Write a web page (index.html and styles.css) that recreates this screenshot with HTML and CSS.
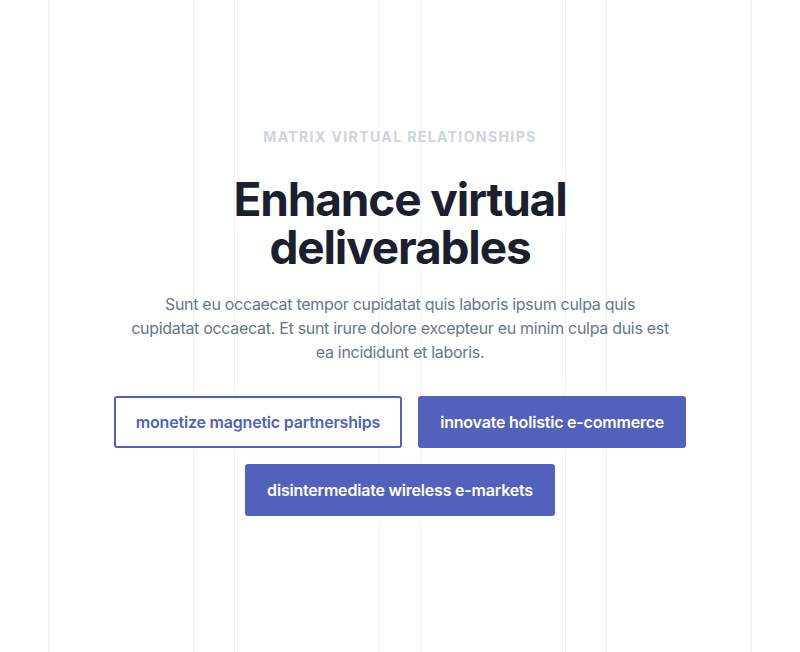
FILE: index.html
```html
<!DOCTYPE html>
<html lang="en">
<head>
<meta charset="utf-8">
<title>Enhance virtual deliverables</title>
<link rel="stylesheet" href="styles.css">
</head>
<body>
<div class="grid-bg" aria-hidden="true">
  <div class="col"></div>
  <div class="col"></div>
  <div class="col"></div>
  <div class="col"></div>
</div>
<main class="hero">
  <p class="eyebrow">Matrix virtual relationships</p>
  <h1 class="title">Enhance virtual<br>deliverables</h1>
  <p class="lead">Sunt eu occaecat tempor cupidatat quis laboris ipsum culpa quis cupidatat occaecat. Et sunt irure dolore excepteur eu minim culpa duis est ea incididunt et laboris.</p>
  <div class="actions">
    <a class="btn btn-outline" href="#">monetize magnetic partnerships</a>
    <a class="btn btn-solid" href="#">innovate holistic e-commerce</a>
    <a class="btn btn-solid" href="#">disintermediate wireless e-markets</a>
  </div>
</main>
</body>
</html>
```
FILE: styles.css
```css
* { box-sizing: border-box; }
html, body { margin: 0; padding: 0; }
body {
  background: #ffffff;
  font-family: Inter, "Noto Sans", sans-serif;
  min-height: 652px;
  position: relative;
  overflow: hidden;
}
.grid-bg {
  position: absolute;
  top: 0; bottom: 0; left: 48px; right: 48px;
  display: grid;
  grid-template-columns: repeat(4, 1fr);
  column-gap: 40px;
  z-index: 0;
}
.col {
  border-left: 1px solid #f0f1f6;
  border-right: 1px solid #f0f1f6;
}
.hero {
  position: relative;
  z-index: 1;
  display: flex;
  flex-direction: column;
  align-items: center;
  text-align: center;
  padding-top: 127px;
}
.eyebrow {
  margin: 0;
  font-size: 14px;
  line-height: 20px;
  font-weight: 700;
  letter-spacing: 0.1em;
  text-transform: uppercase;
  color: #cbd4e0;
}
.title {
  margin: 28px 0 0;
  font-size: 46px;
  line-height: 48px;
  font-weight: 700;
  letter-spacing: -0.025em;
  color: #1b1f2e;
}
.lead {
  margin: 21px 0 0;
  max-width: 539px;
  font-size: 16px;
  line-height: 24px;
  letter-spacing: -0.3px;
  color: #68768a;
}
.actions {
  margin-top: 32px;
  max-width: 600px;
  display: flex;
  flex-wrap: wrap;
  justify-content: center;
  gap: 16px;
}
.btn {
  display: inline-block;
  padding: 12px 20px;
  border: 2px solid #5262bc;
  border-radius: 3px;
  font-size: 16px;
  line-height: 24px;
  font-weight: 600;
  letter-spacing: -0.2px;
  text-decoration: none;
}
.btn-outline { background: #ffffff; color: #5262bc; }
.btn-solid { background: #5262bc; color: #ffffff; }
```
